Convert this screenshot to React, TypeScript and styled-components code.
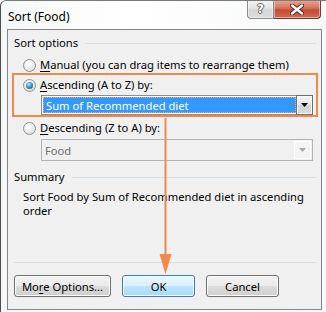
import styled, { createGlobalStyle } from "styled-components";

const GlobalStyle = createGlobalStyle`
  html, body {
    margin: 0;
    padding: 0;
    background: #ffffff;
  }
  body {
    font-family: "Noto Sans", "Open Sans", sans-serif;
    font-size: 11.2px;
    color: #000;
  }
`;

const Window = styled.div`
  position: relative;
  width: 326px;
  height: 312px;
  box-sizing: border-box;
  display: flex;
  flex-direction: column;
  background: linear-gradient(to right, #f6f7f8, #ffffff 40%, #f7f8f9);
  border-left: 1px solid #4d4d4d;
  border-top: 1px solid #7a7a7a;
  border-top-left-radius: 6px;
  overflow: hidden;
`;

const TitleBar = styled.div`
  height: 28px;
  display: flex;
  align-items: flex-start;
  justify-content: space-between;
  padding-left: 7px;
  padding-right: 5px;
`;

const Title = styled.div`
  font-size: 12px;
  line-height: 16px;
  margin-top: 8px;
`;

const Caption = styled.div`
  display: flex;
  margin-top: -1px;
`;

const CaptionButton = styled.div<{ $close?: boolean }>`
  width: ${(p) => (p.$close ? 47 : 27)}px;
  height: 19px;
  box-sizing: border-box;
  display: flex;
  align-items: center;
  justify-content: center;
  border: 1px solid ${(p) => (p.$close ? "#6f3a31" : "#8a8a8a")};
  border-top: none;
  border-radius: ${(p) => (p.$close ? "0 0 4px 0" : "0 0 0 4px")};
  ${(p) => (p.$close ? "border-left: none;" : "")}
  background: ${(p) =>
    p.$close
      ? "linear-gradient(#e9a99a, #d8725c 45%, #c44b33 55%, #d36a4e)"
      : "linear-gradient(#f4f4f4, #e4e4e4 45%, #d5d5d5 55%, #dcdcdc)"};
  box-shadow: inset 0 0 0 1px rgba(255, 255, 255, 0.45);
`;

const HelpGlyph = styled.span`
  font-family: "DejaVu Sans", sans-serif;
  font-weight: bold;
  font-size: 12px;
  line-height: 12px;
  color: #f7f7f7;
  text-shadow: 1px 0 #6a6a6a, -1px 0 #6a6a6a, 0 1px #6a6a6a, 0 -1px #6a6a6a;
`;

const Client = styled.div`
  flex: 1;
  margin: 0 4px 2px 6px;
  border: 1px solid #858585;
  background: #f0f0f0;
  padding: 5px 5px 12px 6px;
  display: flex;
  flex-direction: column;
`;

const SectionHeader = styled.div<{ $gap?: number }>`
  display: flex;
  align-items: center;
  gap: 7px;
  height: 16px;
  line-height: 16px;
  margin-top: ${(p) => p.$gap ?? 0}px;
  &::after {
    content: "";
    flex: 1;
    border-top: 1px solid #d5dfe5;
    margin-top: 1px;
  }
`;

const RadioRow = styled.div<{ $gap?: number }>`
  display: flex;
  align-items: center;
  gap: 4px;
  height: 16px;
  line-height: 16px;
  padding-left: 9px;
  margin-top: ${(p) => p.$gap ?? 0}px;
`;

const RadioCircle = styled.span<{ $checked?: boolean }>`
  width: 13px;
  height: 13px;
  box-sizing: border-box;
  border-radius: 50%;
  border: 1px solid #8f9191;
  background: radial-gradient(circle at 40% 35%, #ffffff, #e9e9e9 55%, #cfcfcf);
  display: flex;
  align-items: center;
  justify-content: center;
  &::after {
    content: "";
    display: ${(p) => (p.$checked ? "block" : "none")};
    width: 7px;
    height: 7px;
    border-radius: 50%;
    background: radial-gradient(circle at 40% 35%, #bfe8fb, #2a8fd0 50%, #0b4f86);
  }
`;

const Key = styled.span`
  text-decoration: underline;
  text-underline-offset: 2px;
`;

const Highlight = styled.div`
  margin: 0 -2px;
  border: 2px solid #f4874b;
  padding: 2px 0 0 0;
  display: flex;
  flex-direction: column;
`;

const Combo = styled.div<{ $disabled?: boolean; $gap?: number }>`
  display: flex;
  height: ${(p) => (p.$disabled ? 22 : 20)}px;
  box-sizing: border-box;
  margin: ${(p) => p.$gap ?? 0}px 3px 0 27px;
  border: 1px solid ${(p) => (p.$disabled ? "#b4b4b4" : "#8d8d8d")};
  background: ${(p) => (p.$disabled ? "#f0f0f0" : "#ffffff")};
  padding: ${(p) => (p.$disabled ? "0" : "1px 0 0 1px")};
`;

const ComboField = styled.div<{ $selected?: boolean; $disabled?: boolean }>`
  flex: 1;
  box-sizing: border-box;
  display: flex;
  align-items: center;
  padding-left: ${(p) => (p.$selected ? 2 : 3)}px;
  margin-bottom: ${(p) => (p.$selected ? 1 : 0)}px;
  background: ${(p) => (p.$selected ? "#3399ff" : "transparent")};
  color: ${(p) => (p.$selected ? "#ffffff" : p.$disabled ? "#6d6d6d" : "#000")};
  border: ${(p) => (p.$selected ? "1px dotted #f0a868" : "none")};
`;

const ComboButton = styled.div<{ $disabled?: boolean }>`
  width: 17px;
  box-sizing: border-box;
  display: flex;
  align-items: center;
  justify-content: center;
  margin: ${(p) => (p.$disabled ? "1px" : "-2px -1px -1px 0")};
  border: 1px solid ${(p) => (p.$disabled ? "#ffffff" : "#6e6e6e")};
  background: ${(p) =>
    p.$disabled ? "#f4f4f4" : "linear-gradient(#f3f3f3, #e6e6e6 50%, #d2d2d2 51%, #dadada)"};
  box-shadow: ${(p) => (p.$disabled ? "none" : "inset 0 0 0 1px #fafafa")};
`;

const DownArrow = ({ color }: { color: string }) => (
  <svg width="7" height="4" viewBox="0 0 7 4">
    <path d="M0 0 H7 L3.5 4 Z" fill={color} />
  </svg>
);

const Summary = styled.div`
  margin-top: 5px;
  padding-left: 9px;
  width: 285px;
  line-height: 14px;
`;

const Spacer = styled.div`
  flex: 1;
`;

const Separator = styled.div`
  border-top: 1px solid #d5dfe5;
  margin-bottom: 12px;
`;

const ButtonRow = styled.div`
  display: flex;
  gap: 11px;
`;

const Button = styled.div<{ $width: number; $default?: boolean }>`
  width: ${(p) => p.$width}px;
  height: 22px;
  box-sizing: border-box;
  display: flex;
  align-items: center;
  justify-content: center;
  border-radius: 3px;
  border: 1px solid ${(p) => (p.$default ? "#3c7fb1" : "#707070")};
  background: ${(p) =>
    p.$default
      ? "linear-gradient(#eaf6fd, #d9f0fc 50%, #bee6fd 51%, #a7d9f5)"
      : "linear-gradient(#f2f2f2, #ebebeb 50%, #dddddd 51%, #cfcfcf)"};
  box-shadow: inset 0 0 0 1px ${(p) => (p.$default ? "#f4fbff" : "#fbfbfb")};
`;

const Pointer = styled.svg`
  position: absolute;
  left: 157px;
  top: 117px;
`;

export default function App() {
  return (
    <>
      <GlobalStyle />
      <Window>
        <TitleBar>
          <Title>Sort (Food)</Title>
          <Caption>
            <CaptionButton>
              <HelpGlyph>?</HelpGlyph>
            </CaptionButton>
            <CaptionButton $close>
              <svg width="14" height="11" viewBox="0 0 14 11">
                <path
                  d="M2 1.5 L12 9.5 M12 1.5 L2 9.5"
                  stroke="#4a2a24"
                  strokeWidth="4.4"
                  strokeLinecap="round"
                />
                <path
                  d="M2 1.5 L12 9.5 M12 1.5 L2 9.5"
                  stroke="#ffffff"
                  strokeWidth="2.4"
                  strokeLinecap="round"
                />
              </svg>
            </CaptionButton>
          </Caption>
        </TitleBar>
        <Client>
          <SectionHeader>Sort options</SectionHeader>
          <RadioRow $gap={6}>
            <RadioCircle />
            <span>
              <Key>M</Key>anual (you can drag items to rearrange them)
            </span>
          </RadioRow>
          <Highlight>
            <RadioRow>
              <RadioCircle $checked />
              <span>
                <Key>A</Key>scending (A to Z) by:
              </span>
            </RadioRow>
            <Combo $gap={2}>
              <ComboField $selected>Sum of Recommended diet</ComboField>
              <ComboButton>
                <DownArrow color="#000" />
              </ComboButton>
            </Combo>
          </Highlight>
          <RadioRow $gap={3}>
            <RadioCircle />
            <span>
              <Key>D</Key>escending (Z to A) by:
            </span>
          </RadioRow>
          <Combo $disabled $gap={3}>
            <ComboField $disabled>Food</ComboField>
            <ComboButton $disabled>
              <DownArrow color="#a8a8a8" />
            </ComboButton>
          </Combo>
          <SectionHeader $gap={8}>Summary</SectionHeader>
          <Summary>Sort Food by Sum of Recommended diet in ascending order</Summary>
          <Spacer />
          <Separator />
          <ButtonRow>
            <Button $width={97}>
              <span>
                Mo<Key>r</Key>e Options...
              </span>
            </Button>
            <Button $width={73} $default>
              OK
            </Button>
            <Button $width={73}>Cancel</Button>
          </ButtonRow>
        </Client>
        <Pointer width="15" height="157" viewBox="0 0 15 157">
          <path d="M7.5 0 V142" stroke="#f4874b" strokeWidth="2" />
          <path d="M1.5 136 L13.5 136 L7.5 156 Z" fill="#f4874b" />
        </Pointer>
      </Window>
    </>
  );
}
